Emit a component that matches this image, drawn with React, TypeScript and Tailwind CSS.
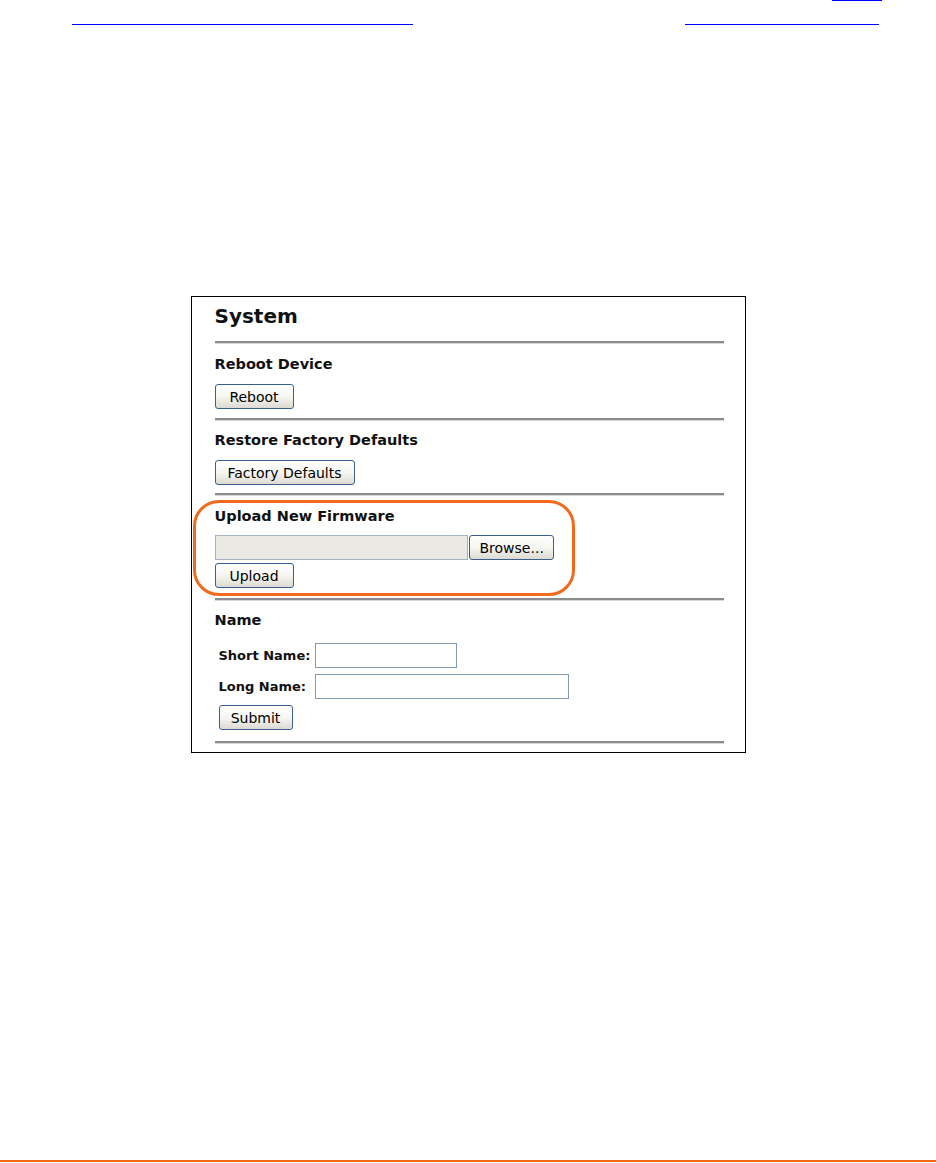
import React from 'react';

const font = { fontFamily: '"Liberation Sans", Arial, sans-serif' };
const dv = { fontFamily: '"DejaVu Sans", Verdana, sans-serif' };

const Rule = () => (
  <div className="h-[3px] w-[509px] border-t-2 border-[#8c8c8c] border-b border-b-[#d8d8d8]" />
);

const XpButton = ({ label, className = '' }: { label: string; className?: string }) => (
  <button
    style={dv}
    className={`h-[25px] px-[10px] text-[14px] leading-none text-black border border-[#3c5e8c] rounded-[3px] bg-gradient-to-b from-white via-[#f6f6f2] to-[#dcdad2] ${className}`}
  >
    {label}
  </button>
);

const Heading = ({ children, className = '' }: { children: React.ReactNode; className?: string }) => (
  <h2 style={dv} className={`text-[14.5px] font-bold text-[#111] leading-[18px] ${className}`}>
    {children}
  </h2>
);

export default function App() {
  return (
    <div className="relative w-[936px] h-[1163px] bg-white overflow-hidden" style={font}>
      {/* cut-off links at the top of the page */}
      <div className="flex justify-end pr-[54px]">
        <a className="block w-[50px] h-px bg-[#0000ff]" />
      </div>
      <div className="flex mt-[23px]">
        <a className="block ml-[72px] w-[341px] h-px bg-[#0000ff]" />
        <a className="block ml-auto mr-[57px] w-[194px] h-px bg-[#0000ff]" />
      </div>

      {/* System panel */}
      <div className="relative mx-auto mt-[271px] w-[555px] h-[457px] border border-black pl-[23px]">
        <h1 style={dv} className="pt-[4px] h-[44px] text-[20px] font-bold text-[#111]">System</h1>
        <Rule />

        <Heading className="mt-[11px]">Reboot Device</Heading>
        <XpButton label="Reboot" className="mt-[11px] w-[79px]" />
        <div className="mt-[9px]"><Rule /></div>

        <Heading className="mt-[10px]">Restore Factory Defaults</Heading>
        <XpButton label="Factory Defaults" className="mt-[11px] w-[140px]" />
        <div className="mt-[8px]"><Rule /></div>

        <Heading className="mt-[11px]">Upload New Firmware</Heading>
        <div className="mt-[10px] flex items-center">
          <div className="w-[253px] h-[25px] bg-[#ebe9e4] border border-[#a5b4c4]" />
          <XpButton label="Browse..." className="ml-px w-[85px]" />
        </div>
        <XpButton label="Upload" className="mt-[3px] w-[79px]" />
        <div className="mt-[10px]"><Rule /></div>

        <Heading className="mt-[10px]">Name</Heading>
        <div className="mt-[14px] pl-[4px] flex flex-col gap-[6px]">
          <div className="flex items-center">
            <span style={dv} className="w-[96px] text-[13px] font-bold text-[#111]">Short Name:</span>
            <div className="w-[142px] h-[25px] border border-[#7f9db9] bg-white" />
          </div>
          <div className="flex items-center">
            <span style={dv} className="w-[96px] text-[13px] font-bold text-[#111]">Long Name:</span>
            <div className="w-[254px] h-[25px] border border-[#7f9db9] bg-white" />
          </div>
          <XpButton label="Submit" className="w-[74px]" />
        </div>
        <div className="mt-[11px]"><Rule /></div>

        {/* highlight around the firmware section */}
        <div className="absolute left-px top-[203px] w-[382px] h-[96px] border-[3px] border-[#f26a1c] rounded-[26px]" />
      </div>

      {/* footer rule */}
      <div className="absolute left-0 right-0 bottom-px h-[2px] bg-[#f26a10]" />
    </div>
  );
}
